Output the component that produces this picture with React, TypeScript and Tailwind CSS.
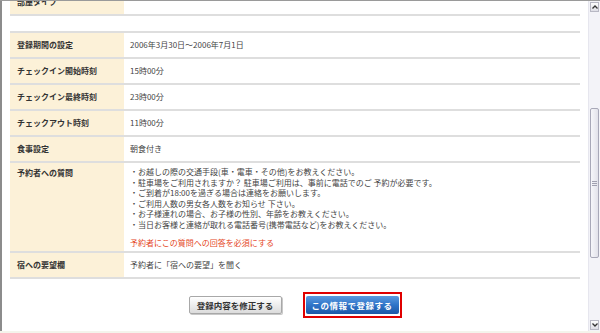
import React from "react";

const font = { fontFamily: '"Noto Sans CJK JP", "Noto Sans", sans-serif' };

function Row({
  label,
  children,
  className = "",
  alignTop = false,
}: {
  label: string;
  children?: React.ReactNode;
  className?: string;
  alignTop?: boolean;
}) {
  return (
    <div className={`grid grid-cols-[114px_1fr] border-b-2 border-[#dedede] ${className}`}>
      <div
        className={`bg-[#fcf1d8] pl-[7px] text-[8px] font-bold text-[#333] flex ${
          alignTop ? "items-start pt-[4px]" : "items-center"
        }`}
      >
        {label}
      </div>
      <div
        className={`pl-[6px] text-[8px] text-[#444] tracking-[0px] flex ${
          alignTop ? "items-start pt-[4px]" : "items-center"
        }`}
      >
        {children}
      </div>
    </div>
  );
}

export default function App() {
  const questions = [
    "・お越しの際の交通手段(車・電車・その他)をお教えください。",
    "・駐車場をご利用されますか？ 駐車場ご利用は、事前に電話でのご 予約が必要です。",
    "・ご到着が18:00を過ぎる場合は連絡をお願いします。",
    "・ご利用人数の男女各人数をお知らせ 下さい。",
    "・お子様連れの場合、お子様の性別、年齢をお教えください。",
    "・当日お客様と連絡が取れる電話番号(携帯電話など)をお教えください。",
  ];
  return (
    <div className="w-[600px] h-[333px] flex flex-col bg-white overflow-hidden" style={font}>
      <div className="flex h-[331px] border-t border-[#9a9a9a]">
        <div className="w-[2px] bg-[#8c8c8c]" />
        <div className="flex-1 flex flex-col overflow-hidden px-[8px]">
          <Row label="部屋タイプ" className="h-[26px] mt-[-11px] shrink-0" />
          <div className="h-[15px] shrink-0" />
          <div className="border-t-2 border-[#dedede] flex flex-col">
            <Row label="登録期間の設定" className="h-[26px]">
              2006年3月30日～2006年7月1日
            </Row>
            <Row label="チェックイン開始時刻" className="h-[26px]">
              15時00分
            </Row>
            <Row label="チェックイン最終時刻" className="h-[26px]">
              23時00分
            </Row>
            <Row label="チェックアウト時刻" className="h-[26px]">
              11時00分
            </Row>
            <Row label="食事設定" className="h-[26px]">
              朝食付き
            </Row>
            <Row label="予約者への質問" className="h-[90px]" alignTop>
              <div className="flex flex-col leading-[10.5px]">
                {questions.map((q) => (
                  <div key={q}>{q}</div>
                ))}
                <div className="mt-[8px] text-[#e5471e]">予約者にこの質問への回答を必須にする</div>
              </div>
            </Row>
            <Row label="宿への要望欄" className="h-[26px]">
              予約者に「宿への要望」を聞く
            </Row>
          </div>
          <div className="flex justify-center items-center gap-[21px] mt-[13px]">
            <div className="w-[93px] h-[18px] flex items-center justify-center rounded-[2px] border border-[#a8a8a8] bg-gradient-to-b from-[#ffffff] to-[#dcdcdc] text-[8.5px] font-bold text-[#333] shadow-[1px_1px_0_#c8c8c8]">
              登録内容を修正する
            </div>
            <div className="border-2 border-[#e00000] px-[1px] py-[2px] bg-white">
              <div className="w-[93px] h-[18px] flex items-center justify-center rounded-[2px] bg-gradient-to-b from-[#5b9be0] via-[#2f74c8] to-[#1c58a6] text-[8.5px] font-bold text-white tracking-[0.5px]">
                この情報で登録する
              </div>
            </div>
          </div>
        </div>
        <div className="w-[12px] flex flex-col bg-[#f3f3f8] border-l border-[#e6e6ee]">
          <div className="mt-[1px] mx-[1px] h-[10px] border border-[#b8b8c4] bg-gradient-to-b from-[#fdfdfd] to-[#dedee6] flex items-center justify-center">
            <svg width="6" height="4" viewBox="0 0 6 4">
              <path d="M0.5 3.5 L3 1 L5.5 3.5" stroke="#333" strokeWidth="1.3" fill="none" />
            </svg>
          </div>
          <div className="h-[96px]" />
          <div className="mx-[1px] h-[150px] border border-[#a8a8b8] rounded-[2px] bg-gradient-to-r from-[#f6f6fa] to-[#e2e2ea] flex items-center justify-center">
            <div className="flex flex-col gap-[1px]">
              <div className="w-[5px] h-[1px] bg-[#a0a0b0]" />
              <div className="w-[5px] h-[1px] bg-[#a0a0b0]" />
              <div className="w-[5px] h-[1px] bg-[#a0a0b0]" />
            </div>
          </div>
          <div className="flex-1" />
          <div className="mb-[1px] mx-[1px] h-[10px] border border-[#b8b8c4] bg-gradient-to-b from-[#fdfdfd] to-[#dedee6] flex items-center justify-center">
            <svg width="6" height="4" viewBox="0 0 6 4">
              <path d="M0.5 0.5 L3 3 L5.5 0.5" stroke="#333" strokeWidth="1.3" fill="none" />
            </svg>
          </div>
        </div>
      </div>
      <div className="h-[2px] bg-[#f4f4ec]" />
    </div>
  );
}
